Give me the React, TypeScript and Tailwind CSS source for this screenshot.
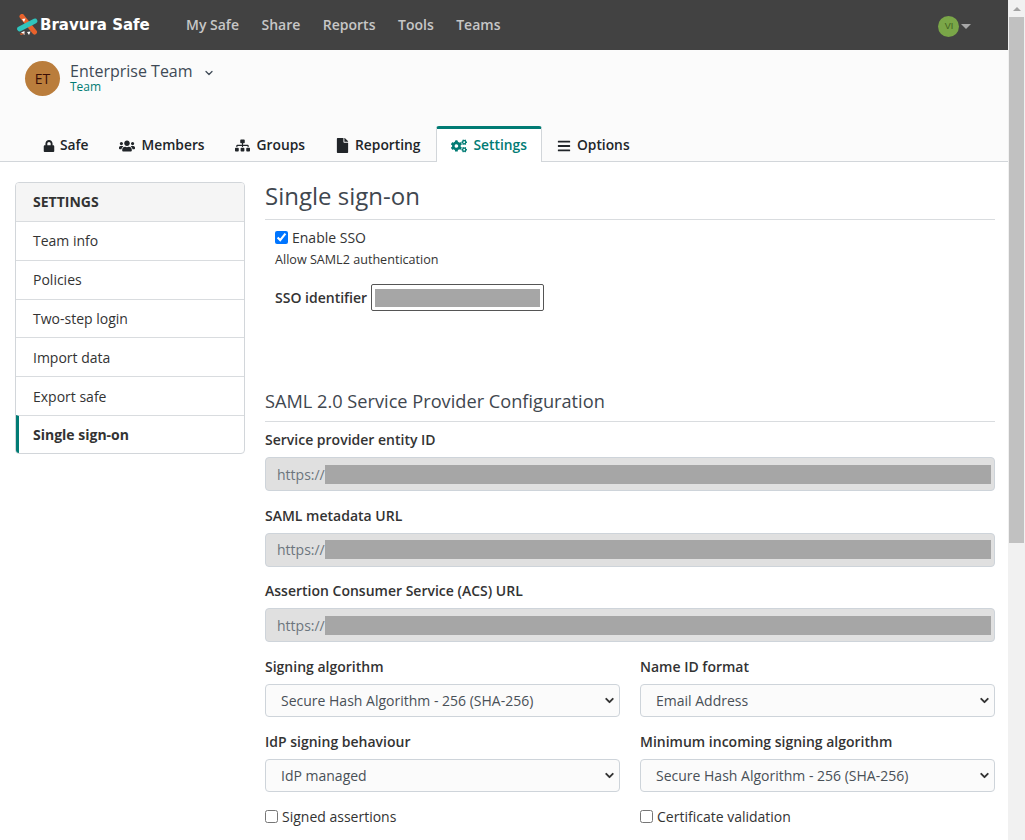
import React from 'react';
import { FaLock, FaUsers, FaSitemap, FaFile, FaCogs, FaBars } from 'react-icons/fa';
import { ChevronDown } from 'lucide-react';

const navItems = ['My Safe', 'Share', 'Reports', 'Tools', 'Teams'];
const sideItems = ['Team info', 'Policies', 'Two-step login', 'Import data', 'Export safe'];

const Logo = () => (
  <svg width="22" height="22" viewBox="0 0 22 22" className="shrink-0">
    <path d="M6 2.5 L18.5 18" stroke="#e8622c" strokeWidth="5" strokeLinecap="round" fill="none" />
    <path d="M19 7 L3.5 15" stroke="#2fc4bd" strokeWidth="4.8" strokeLinecap="round" fill="none" />
    <path d="M6 5 L9.5 4.5 L8 8 Z" fill="#fff" />
    <path d="M5 18.5 L8.5 17 L8.5 21 Z" fill="#fff" />
    <path d="M13 21 L11 18 L14.5 17.5 Z" fill="#fff" />
    <path d="M9 19.5 L5 21 L3.5 19.5 Z" fill="#e8622c" />
  </svg>
);

const Redacted = ({ className }: { className: string }) => <div className={`bg-[#a6a6a6] ${className}`} />;

const UrlField = ({ label }: { label: string }) => (
  <div className="mb-[13.5px]">
    <div className="text-[14px] leading-[21px] font-semibold text-[#333] mb-[7px]">{label}</div>
    <div className="h-[34px] bg-[#e0e0e0] border border-[#ced4da] rounded-[4px] flex items-center pl-[11px] pr-[3px] text-[14px] text-[#6c757d]">
      <span>https://</span>
      <Redacted className="flex-1 h-[19px]" />
    </div>
  </div>
);

const SelectField = ({ label, value }: { label: string; value: string }) => (
  <div className="flex-1 min-w-0">
    <div className="text-[14px] leading-[21px] font-semibold text-[#333] mb-[7px]">{label}</div>
    <div className="h-[33px] bg-[#fbfbfb] border border-[#ced4da] rounded-[4px] flex items-center justify-between pl-[15px] pr-[3px] text-[14px] text-[#495057]">
      <span>{value}</span>
      <ChevronDown size={13} strokeWidth={3.5} className="text-[#333]" />
    </div>
  </div>
);

const Tab = ({ icon, label, active }: { icon: React.ReactNode; label: string; active?: boolean }) => (
  <div
    className={
      active
        ? 'h-[36px] -mb-px flex items-center gap-[7px] px-[14px] bg-white border-x border-[#d2d6da] border-t-[3px] border-t-[#017b74] rounded-t-[3px] text-[#017b74]'
        : 'h-[36px] pt-[5px] flex items-center gap-[7px] px-[15px] text-[#212529]'
    }
  >
    {icon}
    <span className="text-[13.8px] font-semibold">{label}</span>
  </div>
);

const App = () => {
  return (
    <div className="flex h-[840px] w-full overflow-hidden bg-white font-['Open_Sans',sans-serif]">
      <div className="flex-1 min-w-0">
        <nav className="h-[50px] bg-[#424242] flex items-center pl-[16px]">
          <Logo />
          <span className="ml-[2px] w-[110px] text-[15px] font-bold whitespace-nowrap text-white font-['DejaVu_Sans',sans-serif]">Bravura Safe</span>
          <div className="ml-[36px] pb-[2px] flex gap-[22.5px] text-[14px] font-semibold text-[#c7c7c7]">
            {navItems.map((n) => (
              <span key={n}>{n}</span>
            ))}
          </div>
          <div className="ml-[438px] mt-[3px] flex items-center gap-[2px]">
            <div className="w-[21px] h-[21px] rounded-full bg-[#7aa648] flex items-center justify-center text-[9px] text-[#3f5f20] font-['Liberation_Sans',sans-serif]">VI</div>
            <div className="w-0 h-0 border-x-[5px] border-x-transparent border-t-[5px] border-t-[#a8a8a8]" />
          </div>
        </nav>

        <header className="h-[112px] bg-[#fbfbfb] border-b border-[#d2d6da] flex flex-col justify-between">
          <div className="flex pl-[25px] pt-[11px]">
            <div className="w-[35px] h-[35px] rounded-full bg-[#ba7d3c] flex items-center justify-center text-[14px] text-[#3a0d05]">ET</div>
            <div className="ml-[10px]">
              <div className="flex items-center text-[#3f4a56] text-[16px] leading-[20px]">
                Enterprise Team
                <ChevronDown size={12} strokeWidth={2.5} className="ml-[10px] mt-[3px]" />
              </div>
              <div className="text-[12px] leading-[11px] text-[#017b74]">Team</div>
            </div>
          </div>
          <div className="flex pl-[28px] items-end">
            <Tab icon={<FaLock size={12} className="-mr-[2px]" />} label="Safe" />
            <Tab icon={<FaUsers size={16} />} label="Members" />
            <Tab icon={<FaSitemap size={15} />} label="Groups" />
            <Tab icon={<FaFile size={15} className="-mr-[2px]" />} label="Reporting" />
            <Tab active icon={<FaCogs size={16} />} label="Settings" />
            <Tab icon={<FaBars size={14} className="-mr-px" />} label="Options" />
          </div>
        </header>

        <main className="flex gap-[20px] pl-[15px] pr-[13px] pt-[20px]">
          <aside className="w-[230px] shrink-0">
            <div className="border border-[#d2d6da] rounded-[4px] overflow-hidden text-[14px] text-[#333]">
              <div className="h-[38px] pb-px bg-[#f5f5f5] flex items-center pl-[17px] font-bold text-[#333]">SETTINGS</div>
              {sideItems.map((s) => (
                <div key={s} className="h-[38.8px] border-t border-[#d9dcdf] flex items-center pl-[17px] bg-white">{s}</div>
              ))}
              <div className="h-[38px] border-t border-[#d9dcdf] border-l-[3px] border-l-[#017b74] flex items-center pl-[14px] font-bold">Single sign-on</div>
            </div>
          </aside>

          <section className="flex-1 min-w-0">
            <h1 className="h-[38px] text-[24px] leading-[28px] text-[#3f474f] border-b border-[#d9dcdf]">Single sign-on</h1>
            <div className="pl-[10px] pt-[8px]">
              <label className="flex items-center gap-[4px] text-[14px] leading-[19px] text-[#333]">
                <input type="checkbox" defaultChecked readOnly className="w-[13px] h-[13px] m-0 accent-[#0075ff]" />
                Enable SSO
              </label>
              <div className="text-[12.6px] leading-[18px] mt-[4px] text-[#333]">Allow SAML2 authentication</div>
              <div className="flex items-center mt-[15px]">
                <span className="text-[14px] font-semibold text-[#333]">SSO identifier</span>
                <div className="ml-[4px] w-[173px] h-[27px] border border-[#555] rounded-[2px] bg-white flex items-center px-[3px]">
                  <Redacted className="w-full h-[18px]" />
                </div>
              </div>
            </div>

            <h2 className="mt-[78px] h-[33px] text-[18.2px] leading-[25px] text-[#3f474f] border-b border-[#d9dcdf]">SAML 2.0 Service Provider Configuration</h2>
            <div className="pt-[7px]">
              <UrlField label="Service provider entity ID" />
              <UrlField label="SAML metadata URL" />
              <UrlField label="Assertion Consumer Service (ACS) URL" />
            </div>
            <div className="flex gap-[20px]">
              <SelectField label="Signing algorithm" value="Secure Hash Algorithm - 256 (SHA-256)" />
              <SelectField label="Name ID format" value="Email Address" />
            </div>
            <div className="flex gap-[20px] mt-[14.5px]">
              <SelectField label="IdP signing behaviour" value="IdP managed" />
              <SelectField label="Minimum incoming signing algorithm" value="Secure Hash Algorithm - 256 (SHA-256)" />
            </div>
            <div className="flex gap-[20px] mt-[14px] text-[14px] text-[#333]">
              <label className="flex-1 flex items-center gap-[4px]">
                <input type="checkbox" className="w-[13px] h-[13px] m-0" /> Signed assertions
              </label>
              <label className="flex-1 flex items-center gap-[4px]">
                <input type="checkbox" className="w-[13px] h-[13px] m-0" /> Certificate validation
              </label>
            </div>
          </section>
        </main>
      </div>

      <div className="w-[17px] shrink-0 bg-[#f1f1f1] flex flex-col items-center">
        <div className="h-[17px] flex items-center justify-center">
          <div className="w-0 h-0 border-x-[4px] border-x-transparent border-b-[4px] border-b-[#a3a3a3]" />
        </div>
        <div className="w-[15px] h-[526px] bg-[#c1c1c1]" />
      </div>
    </div>
  );
};

export default App;
